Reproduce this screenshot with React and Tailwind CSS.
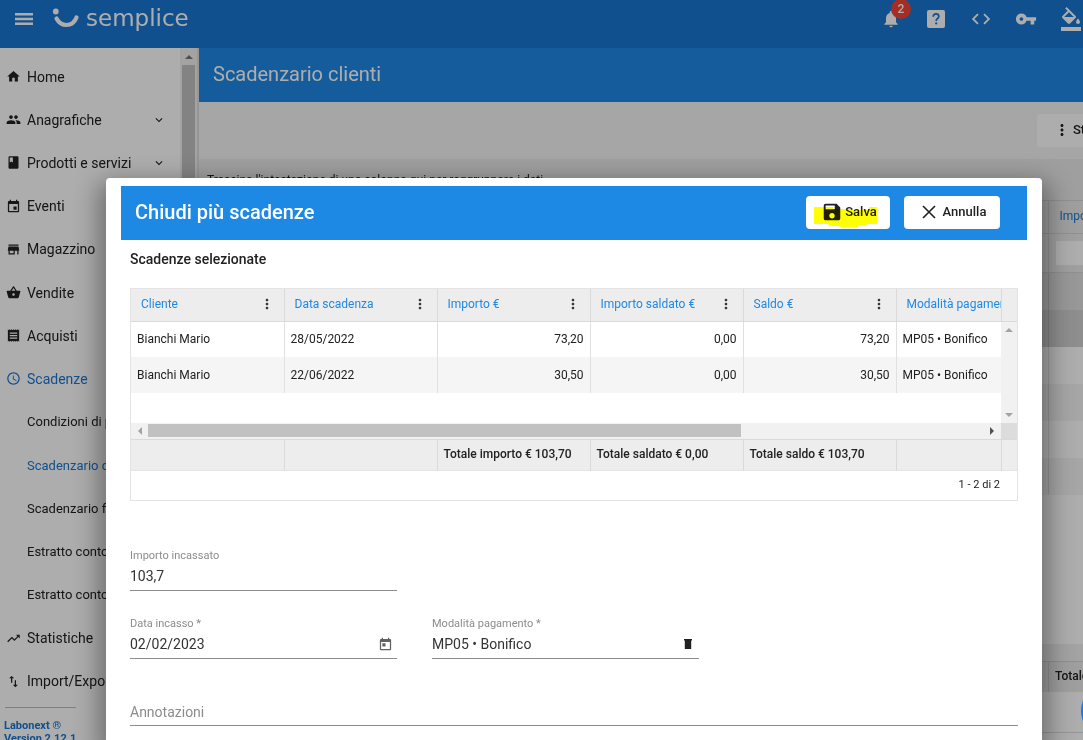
import React from "react";
import {
  MdNotifications, MdCode, MdVpnKey, MdFormatColorFill, MdHome, MdPeople, MdBook,
  MdEvent, MdStore, MdShoppingBasket, MdReceipt, MdSchedule, MdTrendingUp, MdImportExport,
  MdExpandMore, MdToday, MdSave, MdMoreVert,
} from "react-icons/md";

const NAV = [
  { label: "Home", icon: MdHome },
  { label: "Anagrafiche", icon: MdPeople, expandable: true },
  { label: "Prodotti e servizi", icon: MdBook, expandable: true },
  { label: "Eventi", icon: MdEvent },
  { label: "Magazzino", icon: MdStore },
  { label: "Vendite", icon: MdShoppingBasket },
  { label: "Acquisti", icon: MdReceipt },
  { label: "Scadenze", icon: MdSchedule, active: true },
  { label: "Condizioni di pagamento", sub: true },
  { label: "Scadenzario clienti", sub: true, active: true },
  { label: "Scadenzario fornitori", sub: true },
  { label: "Estratto conto clienti", sub: true },
  { label: "Estratto conto fornitori", sub: true },
  { label: "Statistiche", icon: MdTrendingUp },
  { label: "Import/Export", icon: MdImportExport },
];

const COLUMNS = ["Cliente", "Data scadenza", "Importo €", "Importo saldato €", "Saldo €"];
const ROWS = [
  ["Bianchi Mario", "28/05/2022", "73,20", "0,00", "73,20", "MP05 • Bonifico"],
  ["Bianchi Mario", "22/06/2022", "30,50", "0,00", "30,50", "MP05 • Bonifico"],
];
const TOTALS = ["", "", "Totale importo € 103,70", "Totale saldato € 0,00", "Totale saldo € 103,70", ""];
const BACK_ROWS = ["bg-[#e0e0e0]", "bg-[#d2d2d2]", "bg-white", "bg-[#f5f5f5]", "bg-white", "bg-[#f5f5f5]"];

function Arrow({ points, className }) {
  return (
    <svg viewBox="0 0 8 8" className={"size-2 shrink-0 " + className} fill="currentColor" aria-hidden="true">
      <polygon points={points} />
    </svg>
  );
}

function TopBar() {
  return (
    <header className="flex h-12 shrink-0 items-center bg-[#1976d2] pl-[15px] text-white">
      <button aria-label="Menu" className="-mt-2.5">
        <svg viewBox="0 0 18 12" className="h-3 w-[18px]" fill="currentColor" aria-hidden="true">
          <path d="M0 0H18V2.400H0ZM0 4.800H18V7.200H0ZM0 9.600H18V12H0Z" />
        </svg>
      </button>
      <a href="#home" className="-mt-3 ml-[19px] flex items-center gap-1.5">
        <svg viewBox="0 0 28 20" className="h-5 w-7" fill="none" aria-hidden="true">
          <circle cx="3.800" cy="3.500" r="2.900" fill="currentColor" />
          <path d="M4.500 10.500Q8 17 14.500 17Q21.500 17 24.500 9.500" stroke="currentColor" strokeWidth="4.200" strokeLinecap="round" />
        </svg>
        <span className="font-['DejaVu_Sans',sans-serif] text-[23px] leading-6">semplice</span>
      </a>
      <div className="-mt-2.5 ml-auto flex shrink-0 items-center">
        <button aria-label="Notifiche" className="relative mr-[26px]">
          <MdNotifications className="size-5" />
          <span className="absolute -top-2.5 left-2.5 flex size-5 items-center justify-center rounded-full bg-[#f44336] text-xs font-medium">2</span>
        </button>
        <button aria-label="Aiuto" className="mr-[25px]">
          <svg viewBox="0 0 18 18" className="size-[18px]" aria-hidden="true">
            <rect width="18" height="18" rx="2" fill="currentColor" />
            <path d="M6.200 6.700Q6.400 3.900 9.100 3.900Q11.800 3.900 11.800 6.400Q11.800 7.700 10.300 8.700Q9.200 9.400 9.200 10.900" fill="none" stroke="#1976d2" strokeWidth="1.700" />
            <circle cx="9.200" cy="13.400" r="1.100" fill="#1976d2" />
          </svg>
        </button>
        <button aria-label="Codice" className="mr-[23px]"><MdCode className="size-[22px]" /></button>
        <button aria-label="Password" className="mr-[22px]"><MdVpnKey className="size-[22px]" /></button>
        <button aria-label="Tema"><MdFormatColorFill className="size-6" /></button>
      </div>
    </header>
  );
}

function Sidebar() {
  return (
    <aside className="flex w-[199px] shrink-0 bg-white">
      <div className="min-w-0 flex-1">
        <nav className="mt-[7px] grid h-[648px] auto-rows-fr">
          {NAV.map(({ label, icon: Icon, sub, active, expandable }) => (
            <a
              key={label}
              href="#nav"
              className={
                "flex items-center overflow-hidden pl-1.5 whitespace-nowrap " +
                (sub ? "text-[13px] " : "text-sm ") +
                (active ? "text-[#1976d2]" : "text-[#212121]")
              }
            >
              <span className="mr-1.5 w-[15px] shrink-0">{Icon && <Icon className="size-[15px]" />}</span>
              {label}
              {expandable && <MdExpandMore className="mr-3.5 ml-auto size-3.5" />}
            </a>
          ))}
        </nav>
        <div className="mt-1 ml-[5px] w-[71px] border-t border-[#bbb]" />
        <p className="mt-[11px] ml-1 text-[11px] leading-[13px] font-bold whitespace-nowrap text-[#1976d2]">
          Labonext ®<br />Version 2.12.1
        </p>
      </div>
      <div className="flex w-[17px] flex-col items-center bg-[#f1f1f1] pt-[5px] text-[#777]">
        <Arrow points="0,6 4,2 8,6" className="" />
        <div className="mt-1 w-[13px] flex-1 bg-[#c1c1c1]" />
      </div>
      <div className="w-0.5 bg-[#ddd]" />
    </aside>
  );
}

function Backdrop() {
  return (
    <main className="flex min-w-0 flex-1 flex-col bg-[#ebebeb]">
      <h1 className="flex h-[54px] shrink-0 items-center bg-[#1e88e5] pb-0.5 pl-3.5 text-xl text-white">Scadenzario clienti</h1>
      <div className="flex h-[57px] shrink-0 items-center justify-end overflow-hidden bg-[#f5f5f5]">
        <button className="flex h-[33px] w-[46px] items-center overflow-hidden rounded-l bg-white pb-0.5 pl-4 text-[13px] font-medium whitespace-nowrap text-[#212121]">
          <MdMoreVert className="mr-0.5 size-[18px] shrink-0" />Stampa
        </button>
      </div>
      <p className="h-[41px] shrink-0 pt-[13px] pl-2 text-xs leading-4 text-[#212121]">
        Trascina l'intestazione di una colonna qui per raggruppare i dati
      </p>
      <table className="w-full table-fixed border-collapse text-left text-xs text-[#212121]">
        <colgroup><col /><col className="w-[35px]" /></colgroup>
        <thead>
          <tr className="h-[33px] border-y border-[#d5d5d5]">
            <th />
            <th className="overflow-hidden border-l border-[#d5d5d5] pb-0.5 pl-[11px] font-normal whitespace-nowrap text-[#1976d2]">Importo €</th>
          </tr>
          <tr className="h-[39px] border-b border-[#d5d5d5]">
            <td />
            <td className="overflow-hidden border-l border-[#d5d5d5] py-[7px] pl-[7px]"><input aria-label="Filtro importo" className="block h-6 w-full bg-white" /></td>
          </tr>
        </thead>
        <tbody>
          {BACK_ROWS.map((color, i) => (
            <tr key={i} className={"h-[37px] " + color}>
              <td /><td className="border-l border-black/10" />
            </tr>
          ))}
        </tbody>
      </table>
      <div className="h-[149px] shrink-0 bg-white" />
      <div className="h-[17px] shrink-0 bg-[#f1f1f1]" />
      <div className="flex h-[31px] shrink-0 justify-end border-t border-[#d5d5d5]">
        <strong className="flex w-[35px] items-center overflow-hidden border-l border-[#d5d5d5] pb-0.5 pl-1.5 text-xs font-medium text-[#212121]">Totale</strong>
      </div>
      <div className="h-[41px] shrink-0 border-b border-[#ddd] bg-white" />
      <div className="flex-1 bg-white" />
    </main>
  );
}

function DeadlineTable() {
  return (
    <div className="mx-[9px] border border-[#e4e4e4] text-xs text-[#212121]">
      <table className="w-full table-fixed border-collapse text-left">
        <colgroup>
          <col className="w-[153px]" /><col className="w-[153px]" /><col className="w-[153px]" />
          <col className="w-[153px]" /><col className="w-[153px]" /><col /><col className="w-4" />
        </colgroup>
        <thead className="bg-[#ededed]">
          <tr className="h-8 border-b border-[#dadada]">
            {COLUMNS.map((c) => (
              <th key={c} className="border-r border-[#dadada] p-0 pb-0.5 font-normal text-[#1e88e5]">
                <div className="flex items-center justify-between pr-[9px] pl-2.5">
                  {c}
                  <button aria-label={"Opzioni " + c} className="text-[#333]"><MdMoreVert className="size-4" /></button>
                </div>
              </th>
            ))}
            <th className="overflow-hidden border-r border-[#dadada] p-0 pb-0.5 pl-2.5 font-normal whitespace-nowrap text-[#1e88e5]">Modalità pagamento</th>
            <th />
          </tr>
        </thead>
        <tbody>
          {ROWS.map((row, r) => (
            <tr key={r} className="h-9">
              {row.map((v, c) => (
                <td
                  key={c}
                  className={
                    "px-1.5 whitespace-nowrap " +
                    (c < 5 ? "border-r border-[#e0e0e0] " : "") +
                    (r ? "bg-[#f5f5f5] " : "") +
                    (c > 1 && c < 5 ? "text-right" : "")
                  }
                >
                  {v}
                </td>
              ))}
              {r === 0 && (
                <td rowSpan={3} className="bg-[#f1f1f1] p-0 text-[#a3a3a3]">
                  <div className="flex h-[101px] flex-col items-center justify-between py-1">
                    <Arrow points="0,6 4,2 8,6" className="" />
                    <Arrow points="0,2 4,6 8,2" className="" />
                  </div>
                </td>
              )}
            </tr>
          ))}
          <tr className="h-[29px]"><td colSpan={6} /></tr>
          <tr className="h-[17px]">
            <td colSpan={6} className="bg-[#f1f1f1] p-0">
              <div className="flex items-center px-[5px]">
                <Arrow points="6,0 2,4 6,8" className="mr-1 text-[#a3a3a3]" />
                <div className="h-[13px] w-[69%] bg-[#c1c1c1]" />
                <Arrow points="2,0 6,4 2,8" className="ml-auto text-[#505050]" />
              </div>
            </td>
            <td className="bg-[#dcdcdc]" />
          </tr>
        </tbody>
        <tfoot className="bg-[#ededed]">
          <tr className="h-[31px] border-y border-t-[#dadada] border-b-[#e4e4e4]">
            {TOTALS.map((t, i) => (
              <td key={i} className="border-r border-[#dadada] px-1.5 pb-0.5 font-medium whitespace-nowrap">{t}</td>
            ))}
            <td />
          </tr>
        </tfoot>
      </table>
      <p className="flex h-[29px] items-center justify-end pr-[17px] text-[11px]">1 - 2 di 2</p>
    </div>
  );
}

function Field({ id, label, value, children }) {
  return (
    <div className="w-[267px] border-b border-[#8c8c8c] pb-0.5">
      <label htmlFor={id} className="block text-[11px] leading-4 text-[#8c8c8c]">{label}</label>
      <div className="flex h-6 items-center">
        <input id={id} defaultValue={value} className="min-w-0 flex-1 text-sm text-[#333] outline-none" />
        {children}
      </div>
    </div>
  );
}

function Dialog() {
  return (
    <section role="dialog" aria-labelledby="dialog-title" className="flex-1 rounded-t bg-white px-[15px] pt-2 shadow-[0_11px_25px_8px_rgba(0,0,0,0.35)]">
      <div className="flex h-[54px] items-center gap-3.5 bg-[#1e88e5] pr-[27px] pb-0.5 pl-3.5">
        <h2 id="dialog-title" className="mr-auto text-xl font-medium text-white">Chiudi più scadenze</h2>
        <button className="relative flex h-[33px] w-[84px] items-center justify-center gap-0.5 rounded bg-white pl-0.5 text-[13px] font-medium text-[#212121]">
          <MdSave className="size-[22px]" />Salva
          <svg viewBox="0 0 64 21" className="absolute top-2.5 left-2 h-[21px] w-16 mix-blend-multiply" aria-hidden="true">
            <path d="M0 1H19V3H38V4H55V1H63V18H54L52 19H45L43 21H27L25 20H16L14 18H0Z" fill="#ffff00" />
          </svg>
        </button>
        <button className="flex h-[33px] w-24 items-center justify-center gap-1.5 rounded bg-white pl-[3px] text-[13px] font-medium text-[#212121]">
          <svg viewBox="0 0 14 14" className="mx-px size-3.5" fill="none" stroke="currentColor" strokeWidth="1.600" aria-hidden="true">
            <path d="M1 1L13 13M13 1L1 13" />
          </svg>
          Annulla
        </button>
      </div>
      <h3 className="mx-[9px] mt-2.5 mb-5 text-sm leading-[18px] font-medium text-[#212121]">Scadenze selezionate</h3>
      <DeadlineTable />
      <form className="mx-[9px] mt-[47px] flex flex-col gap-[25px]">
        <Field id="amount" label="Importo incassato" value="103,7" />
        <div className="flex gap-[35px]">
          <Field id="date" label="Data incasso *" value="02/02/2023">
            <button type="button" aria-label="Apri calendario" className="mr-1 text-[#616161]"><MdToday className="size-[15px]" /></button>
          </Field>
          <Field id="method" label="Modalità pagamento *" value="MP05 • Bonifico">
            <button type="button" aria-label="Elimina" className="mr-1.5 text-[#212121]">
              <svg viewBox="0 0 10 12" className="h-3 w-2.5" fill="currentColor" aria-hidden="true">
                <path d="M1 1H9V2.500H8.200V11H1.800V2.500H1Z" />
              </svg>
            </button>
          </Field>
        </div>
        <input aria-label="Annotazioni" placeholder="Annotazioni" className="mt-[15px] h-[27px] border-b border-[#8c8c8c] text-sm outline-none placeholder:text-[#8c8c8c]" />
      </form>
    </section>
  );
}

export default function App() {
  return (
    <div className="relative flex h-screen flex-col overflow-hidden font-[Roboto,sans-serif]">
      <TopBar />
      <div className="flex min-h-0 flex-1 overflow-hidden">
        <Sidebar />
        <Backdrop />
      </div>
      <div className="absolute inset-0 flex bg-black/32 pt-[178px] pr-[41px] pl-[106px]">
        <Dialog />
      </div>
      <button aria-label="Assistenza" className="absolute -right-[58px] -bottom-px size-[60px] rounded-full bg-[#0a7cf0]" />
    </div>
  );
}
